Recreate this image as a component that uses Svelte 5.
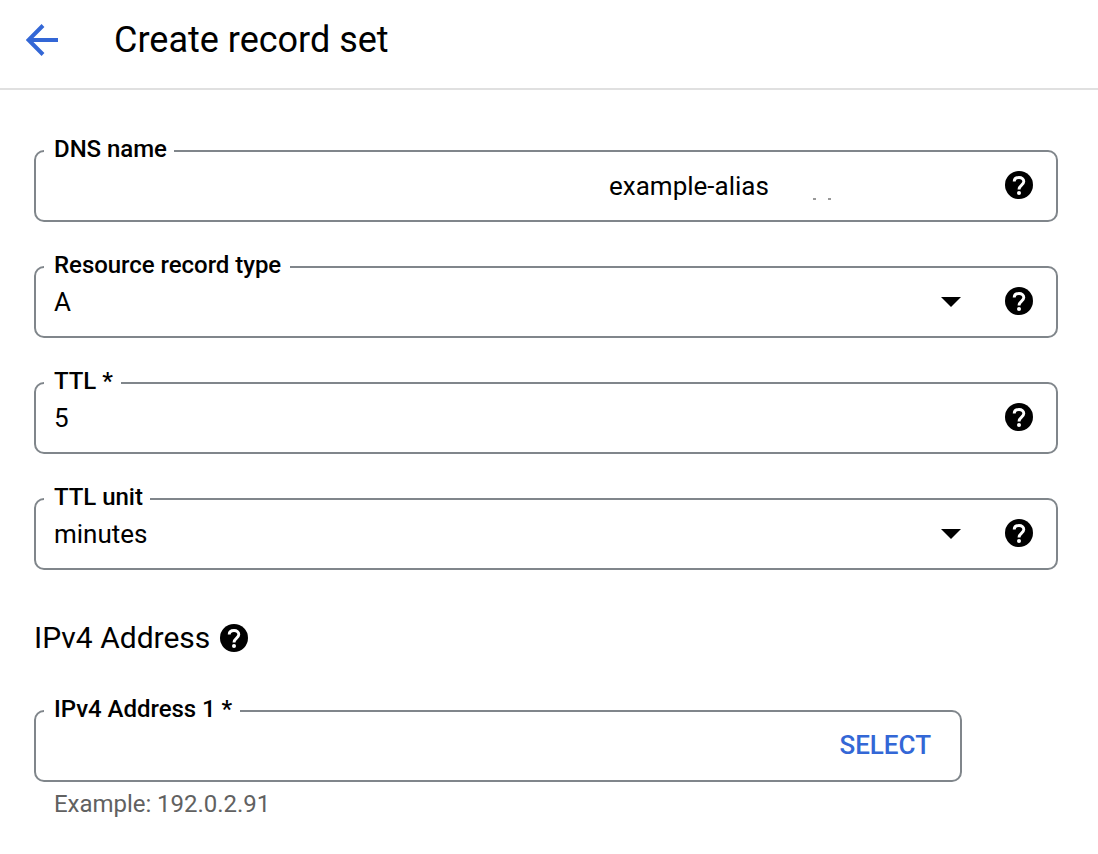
<script>
  const fields = [
    { label: 'DNS name', value: 'example-alias', notch: 130, cls: 'dns' },
    { label: 'Resource record type', value: 'A', notch: 246, select: true },
    { label: 'TTL *', value: '5', notch: 77 },
    { label: 'TTL unit', value: 'minutes', notch: 106, select: true }
  ];
</script>

{#snippet help()}
  <svg class="help" viewBox="0 0 28 28" aria-label="Help">
    <circle cx="14" cy="14" r="14" />
    <path d="M9.2 10.6C9.2 8 11.2 6.5 14 6.5s4.8 1.6 4.8 4.1c0 3.3-4.8 3.7-4.8 7.8" fill="none" stroke="#fff" stroke-width="2.9" />
    <circle cx="14" cy="22.1" r="2" fill="#fff" />
  </svg>
{/snippet}

<header>
  <svg class="back" viewBox="0 0 32 32" aria-label="Back">
    <path d="M32 16H3M17 1.5L2.5 16 17 30.5" />
  </svg>
  <h1>Create record set</h1>
</header>

<main>
  {#each fields as f}
    <div class="field {f.cls ?? ''}">
      <span class="label" style="width: {f.notch}px">{f.label}</span>
      <span class="value">{f.value}</span>
      {#if f.cls}
        <span class="dots"><i></i><i></i></span>
      {/if}
      <span class="end">
        {#if f.select}
          <svg class="caret" viewBox="0 0 20 10"><path d="M0 0h20L10 10z" /></svg>
        {/if}
        {@render help()}
      </span>
    </div>
  {/each}

  <h2>IPv4 Address {@render help()}</h2>

  <div class="field address">
    <span class="label" style="width: 196px">IPv4 Address 1 *</span>
    <button>SELECT</button>
  </div>
  <p>Example: 192.0.2.91</p>
</main>

<style>
  :global(body) {
    background: #fff;
    color: #000;
    font-family: Roboto, sans-serif;
  }
  header {
    box-sizing: border-box;
    height: 90px;
    border-bottom: 2px solid #e0e0e0;
    display: flex;
    align-items: center;
    padding: 0 26px 8px;
    gap: 56px;
  }
  .back {
    width: 32px;
    height: 32px;
    fill: none;
    stroke: #3367d6;
    stroke-width: 4;
  }
  h1 {
    margin: 0;
    font-size: 36px;
    line-height: 40px;
    font-weight: 400;
  }
  main {
    padding: 60px 40px 0 34px;
    display: flex;
    flex-direction: column;
  }
  .field {
    box-sizing: border-box;
    position: relative;
    height: 72px;
    margin-bottom: 44px;
    border: 2px solid #80868b;
    border-radius: 10px;
    display: flex;
    align-items: center;
    padding: 0 23px 0 18px;
  }
  .label {
    position: absolute;
    box-sizing: border-box;
    left: 8px;
    top: -18px;
    padding-left: 10px;
    background: #fff;
    font-size: 24px;
    line-height: 30px;
    font-weight: 500;
    letter-spacing: -0.04px;
    white-space: nowrap;
  }
  .value {
    font-size: 26px;
    line-height: 30px;
  }
  .dns .value {
    margin-left: 555px;
  }
  .dots {
    display: flex;
    gap: 12px;
    margin: 26px 0 0 44px;
  }
  .dots i {
    width: 3px;
    height: 2px;
    background: #999;
  }
  .end {
    display: flex;
    align-items: center;
    gap: 44px;
    margin-left: auto;
    padding-bottom: 2px;
  }
  .help {
    width: 28px;
    height: 28px;
  }
  .caret {
    width: 20px;
    height: 10px;
    margin-top: 2px;
  }
  h2 {
    display: flex;
    align-items: center;
    gap: 10px;
    margin: 6px 0 54px;
    font-size: 30px;
    line-height: 36px;
    font-weight: 400;
  }
  .address {
    width: 928px;
    margin-bottom: 8px;
    padding-right: 29px;
  }
  button {
    margin-left: auto;
    padding: 0 0 2px;
    border: 0;
    background: none;
    color: #3367d6;
    font: 500 26px/30px Roboto, sans-serif;
  }
  p {
    margin: 0 0 0 20px;
    font-size: 24px;
    line-height: 28px;
    letter-spacing: -0.04px;
    color: #616161;
  }
</style>
